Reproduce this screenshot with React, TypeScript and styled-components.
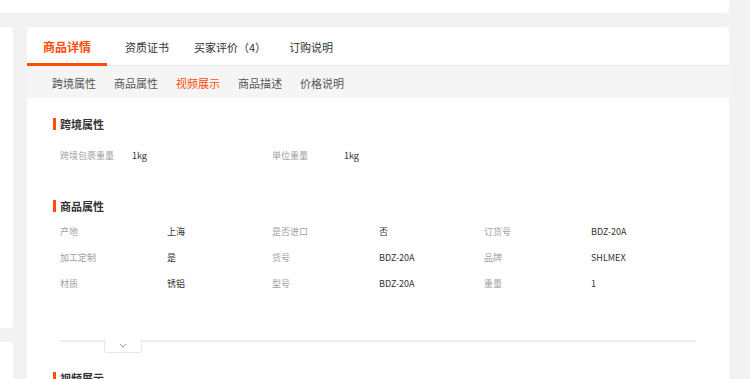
import React from "react";
import styled, { createGlobalStyle } from "styled-components";

const Global = createGlobalStyle`
  html, body { margin: 0; padding: 0; background: #f2f2f2; }
  body { font-family: "Noto Sans CJK SC", "Microsoft YaHei", sans-serif; overflow: hidden; }
  * { box-sizing: border-box; }
`;

const ORANGE = "#ff4c0a";

const Page = styled.div`
  width: 750px;
  height: 379px;
  overflow: hidden;
  display: flex;
  flex-direction: column;
  gap: 14px;
  & > * { flex-shrink: 0; }
`;

const TopCard = styled.div`
  width: 729px;
  height: 13px;
  background: #fff;
  border-radius: 0 0 4px 0;
`;

const Body = styled.div`
  display: flex;
  gap: 14px;
  align-items: flex-start;
`;

const Side = styled.div`
  width: 13px;
  display: flex;
  flex-direction: column;
  gap: 14px;
`;

const SideCard = styled.div<{ $h: number }>`
  height: ${(p) => p.$h}px;
  background: #fff;
  border-radius: 0 4px 4px 0;
`;

const Main = styled.div`
  width: 702px;
  height: 400px;
  background: #fff;
  border-radius: 4px 4px 0 0;
`;

const TabBar = styled.div`
  display: flex;
  height: 39px;
  border-bottom: 1px solid #e6e6e6;
`;

const Tab = styled.div<{ $active?: boolean; $pl: number; $pr: number }>`
  display: flex;
  align-items: center;
  padding: 3px ${(p) => p.$pr}px 0 ${(p) => p.$pl}px;
  font-size: ${(p) => (p.$active ? 12 : 11)}px;
  font-weight: ${(p) => (p.$active ? 700 : 400)};
  color: ${(p) => (p.$active ? ORANGE : "#333")};
  border-bottom: 3px solid ${(p) => (p.$active ? ORANGE : "transparent")};
  margin-bottom: -1px;
  white-space: nowrap;
`;

const SubBar = styled.div`
  display: flex;
  height: 32px;
  align-items: center;
  background: #f5f5f5;
  padding: 1px 0 0 25px;
  gap: 18px;
`;

const SubTab = styled.div<{ $active?: boolean }>`
  font-size: 11px;
  color: ${(p) => (p.$active ? ORANGE : "#555")};
  white-space: nowrap;
`;

const Content = styled.div`
  padding: 18px 33px 0 26px;
`;

const SectionTitle = styled.div<{ $mt: number }>`
  display: flex;
  align-items: center;
  gap: 4px;
  height: 16px;
  margin-top: ${(p) => p.$mt}px;
  font-size: 11px;
  font-weight: 700;
  color: #333;
  &::before {
    content: "";
    width: 3px;
    height: 12px;
    background: ${ORANGE};
  }
`;

const Grid = styled.div<{ $labelW: number; $mt: number }>`
  margin-top: ${(p) => p.$mt}px;
  padding-left: 7px;
  display: grid;
  grid-template-columns: repeat(3, ${(p) => p.$labelW}px ${(p) => 212 - p.$labelW}px);
  grid-auto-rows: 26px;
  align-items: center;
  font-size: 9px;
`;

const Label = styled.div`
  color: #a0a0a0;
  white-space: nowrap;
`;

const Value = styled.div`
  color: #333;
  white-space: nowrap;
`;

const Divider = styled.div`
  position: relative;
  margin: 44px 0 0 7px;
  height: 2px;
  background: #eeeeee;
`;

const Toggle = styled.div`
  position: absolute;
  left: 44px;
  top: -1px;
  width: 38px;
  height: 14px;
  background: #fff;
  border: 1px solid #e8e8e8;
  border-top: none;
  border-radius: 0 0 3px 3px;
  display: flex;
  align-items: center;
  justify-content: center;
`;

const crossBorder = [
  ["跨境包裹重量", "1kg"],
  ["单位重量", "1kg"],
];

const attrs = [
  ["产地", "上海"],
  ["是否进口", "否"],
  ["订货号", "BDZ-20A"],
  ["加工定制", "是"],
  ["货号", "BDZ-20A"],
  ["品牌", "SHLMEX"],
  ["材质", "锈铝"],
  ["型号", "BDZ-20A"],
  ["重量", "1"],
];

export default function App() {
  return (
    <Page>
      <Global />
      <TopCard />
      <Body>
        <Side>
          <SideCard $h={301} />
          <SideCard $h={100} />
        </Side>
        <Main>
          <TabBar>
            <Tab $active $pl={16} $pr={16}>商品详情</Tab>
            <Tab $pl={18} $pr={14}>资质证书</Tab>
            <Tab $pl={11} $pr={9}>买家评价（4）</Tab>
            <Tab $pl={14} $pr={16}>订购说明</Tab>
          </TabBar>
          <SubBar>
            <SubTab>跨境属性</SubTab>
            <SubTab>商品属性</SubTab>
            <SubTab $active>视频展示</SubTab>
            <SubTab>商品描述</SubTab>
            <SubTab>价格说明</SubTab>
          </SubBar>
          <Content>
            <SectionTitle $mt={0}>跨境属性</SectionTitle>
            <Grid $labelW={72} $mt={10}>
              {crossBorder.map(([l, v]) => (
                <React.Fragment key={l}>
                  <Label>{l}</Label>
                  <Value>{v}</Value>
                </React.Fragment>
              ))}
            </Grid>
            <SectionTitle $mt={30}>商品属性</SectionTitle>
            <Grid $labelW={107} $mt={4}>
              {attrs.map(([l, v]) => (
                <React.Fragment key={l}>
                  <Label>{l}</Label>
                  <Value>{v}</Value>
                </React.Fragment>
              ))}
            </Grid>
            <Divider>
              <Toggle>
                <svg width="8" height="5" viewBox="0 0 8 5">
                  <polyline points="1,1 4,4 7,1" fill="none" stroke="#999" strokeWidth="1" />
                </svg>
              </Toggle>
            </Divider>
            <SectionTitle $mt={28}>视频展示</SectionTitle>
          </Content>
        </Main>
      </Body>
    </Page>
  );
}
